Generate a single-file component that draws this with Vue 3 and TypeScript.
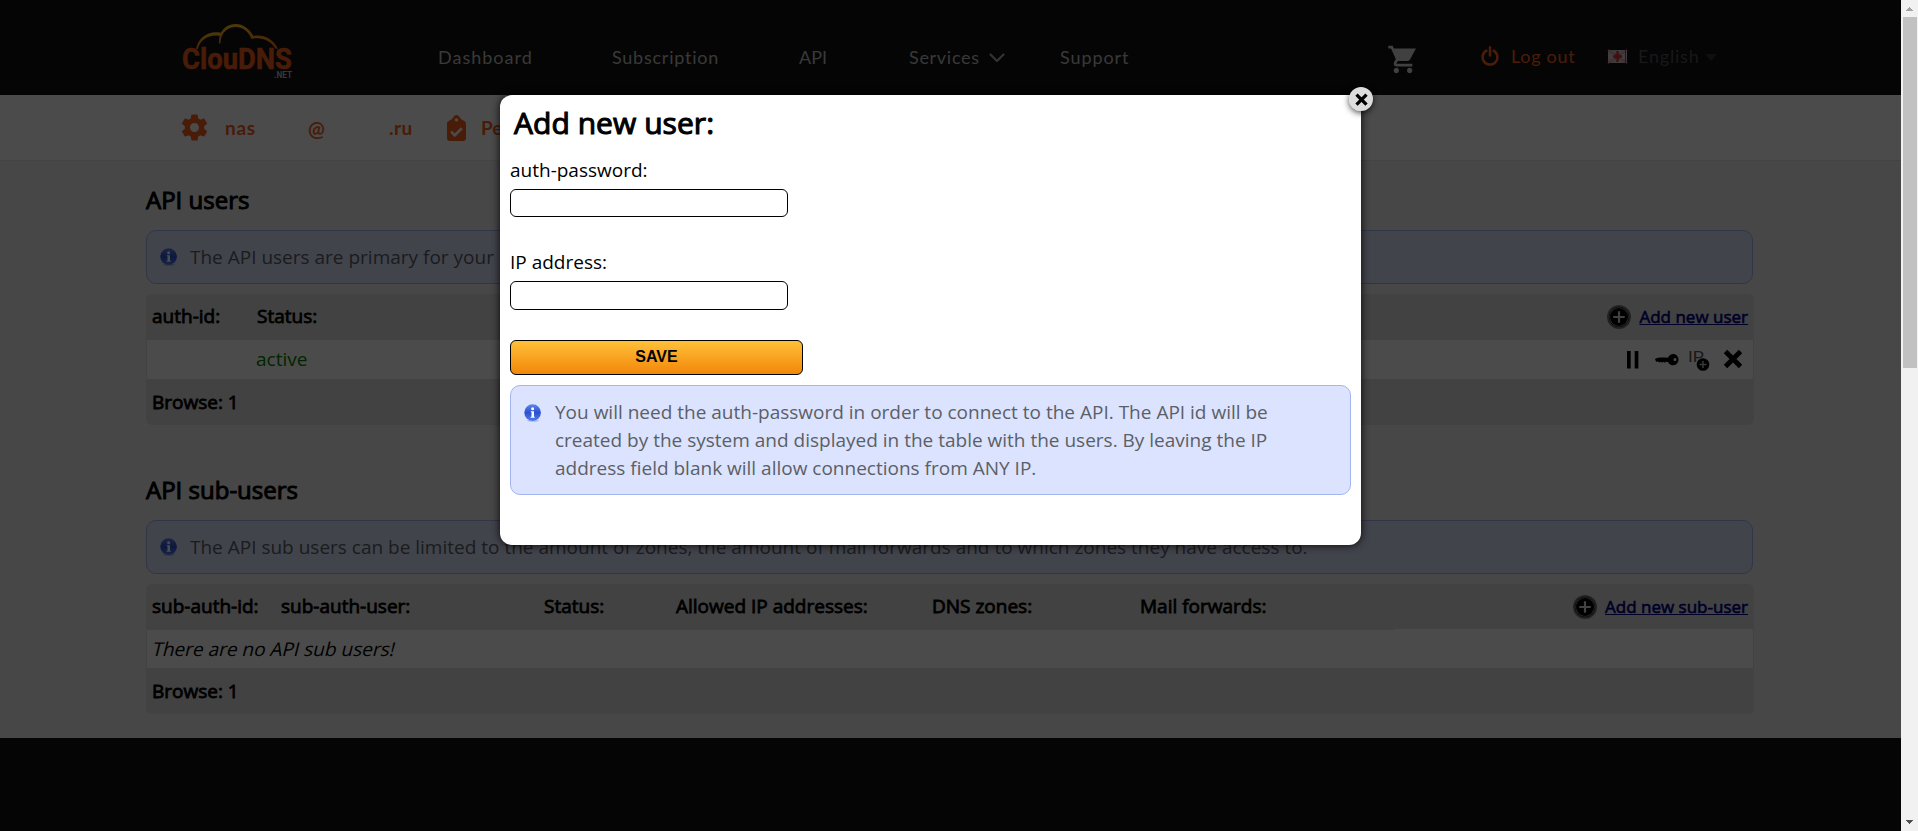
<script setup lang="ts">
import { ref } from 'vue'

interface NavItem { label: string; cls: string }
const nav: NavItem[] = [
  { label: 'Dashboard', cls: 'n-dash' },
  { label: 'Subscription', cls: 'n-sub' },
  { label: 'API', cls: 'n-api' },
  { label: 'Services', cls: 'n-serv' },
  { label: 'Support', cls: 'n-supp' },
]
const subColumns: string[] = ['sub-auth-id:', 'sub-auth-user:', 'Status:', 'Allowed IP addresses:', 'DNS zones:', 'Mail forwards:']
const authPassword = ref('')
const ipAddress = ref('')
</script>

<template>
  <div class="screen">
    <svg class="defs" width="0" height="0" aria-hidden="true">
      <defs>
        <linearGradient id="blueDisc" x1="0" y1="0" x2="0" y2="1">
          <stop offset="0" stop-color="#5f86ea" />
          <stop offset=".5" stop-color="#2b50cf" />
          <stop offset="1" stop-color="#4f7df0" />
        </linearGradient>
        <symbol id="info" viewBox="0 0 18 18">
          <ellipse cx="9" cy="16.6" rx="6" ry="1.2" fill="#8f9cc8" opacity=".6" />
          <circle cx="8.6" cy="8.6" r="8.3" fill="url(#blueDisc)" />
          <circle cx="8.6" cy="4.8" r="1.5" fill="#fff" />
          <path d="M6.8 7.3H10v5.4h.7v1H6.600v-1h.9V8.3h-.7z" fill="#fff" />
        </symbol>
        <symbol id="add" viewBox="0 0 24 24">
          <circle cx="12" cy="12" r="12" fill="#777" />
          <circle cx="12" cy="12" r="10.3" fill="#222" />
          <circle cx="12" cy="12" r="9.6" fill="#999" />
          <circle cx="12" cy="12" r="9" fill="#000" />
          <path d="M12 6.3v11.4M6.3 12h11.4" stroke="#dcdcdc" stroke-width="2.2" />
        </symbol>
      </defs>
    </svg>

    <div class="page">
      <header class="top">
        <svg class="logo" width="112" height="60" viewBox="0 0 112 60">
          <defs>
            <linearGradient id="cloud" x1="0" y1="0" x2="0" y2="1">
              <stop offset="0" stop-color="#ffc020" />
              <stop offset="1" stop-color="#f5701c" />
            </linearGradient>
          </defs>
          <g fill="url(#cloud)">
            <path d="M14 27 C16 15 27 7.500 41 11 L39.500 14 C28 11.500 18 17 16 27Z" />
            <path d="M37 22 C36 8 45 2 54 2 C62 2 68 8 71.500 14 C80 12 91 16 96 27 L93.500 26.500 C88 18 79 14.500 69.500 17 C67 10 61 5 54 5 C46 5 39 10 38.500 21Z" />
          </g>
          <text x="0" y="46.500" textLength="110" lengthAdjust="spacingAndGlyphs" class="logo-name">ClouDNS</text>
          <text x="92" y="55.500" textLength="18" lengthAdjust="spacingAndGlyphs" class="logo-net">.NET</text>
        </svg>
        <nav class="nav">
          <a v-for="n in nav" :key="n.label" :class="n.cls"><span>{{ n.label }}</span><svg v-if="n.label === 'Services'" class="chev" width="16" height="10" viewBox="0 0 16 10"><path d="M1.500 1.500 8 8l6.500-6.500" fill="none" stroke="#aaa" stroke-width="2.200" stroke-linecap="round" stroke-linejoin="round" /></svg></a>
        </nav>
        <svg class="cart" width="32" height="33" viewBox="0 0 24 24" preserveAspectRatio="none"><path fill="#d8d8d8" d="M7 18c-1.100 0-1.990.9-1.990 2S5.900 22 7 22s2-.9 2-2-.9-2-2-2zM1 2v2h2l3.600 7.590-1.350 2.450C4.520 15.370 5.480 17 7 17h12v-2H7l1.100-2h7.450c.75 0 1.410-.41 1.750-1.030L21.700 4H5.210l-.94-2H1zm16 16c-1.100 0-1.990.9-1.990 2s.89 2 1.990 2 2-.9 2-2-.9-2-2-2z" /></svg>
        <a class="logout">
          <svg width="18" height="20" viewBox="0 0 18 20"><path d="M5.500 4.700a7.400 7.400 0 1 0 7 0M9 1.200v8.300" fill="none" stroke="#f56320" stroke-width="2.500" stroke-linecap="round" /></svg>
          <span>Log out</span>
        </a>
        <a class="lang">
          <svg width="19" height="13" viewBox="0 0 19 13">
            <rect width="19" height="13" fill="#c9c9d6" />
            <path d="M0 0l19 13M19 0L0 13" stroke="#f09a9a" stroke-width="2" />
            <path d="M9.500 0v13M0 6.500h19" stroke="#dcd0d4" stroke-width="4" />
            <path d="M9.500 1v11M5 6.500h9" stroke="#e03030" stroke-width="2.400" />
            <path d="M7 4l5 5M12 4L7 9" stroke="#e03030" stroke-width="1.200" />
            <path d="M17.500 0v13" stroke="#3a55b0" stroke-width="1" />
          </svg>
          <span>English</span>
          <svg class="caret" width="12" height="7" viewBox="0 0 12 7"><path d="M0 0h12L6 7z" fill="#353535" /></svg>
        </a>
      </header>

      <div class="account">
        <svg class="gear" width="31" height="31" viewBox="0 0 24 24"><path fill="#f55f1c" d="M19.430 12.980c.04-.32.07-.64.07-.98s-.03-.66-.07-.98l2.110-1.650c.19-.15.24-.42.12-.64l-2-3.460c-.12-.22-.39-.3-.61-.22l-2.490 1c-.52-.4-1.080-.73-1.690-.98l-.38-2.650C14.460 2.180 14.250 2 14 2h-4c-.25 0-.46.18-.49.42l-.38 2.650c-.61.25-1.170.59-1.690.98l-2.490-1c-.23-.09-.49 0-.61.22l-2 3.460c-.13.22-.07.49.12.64l2.110 1.650c-.04.32-.07.65-.07.98s.03.66.07.98l-2.110 1.650c-.19.15-.24.42-.12.64l2 3.460c.12.22.39.3.61.22l2.490-1c.52.4 1.080.73 1.690.98l.38 2.650c.03.24.24.42.49.42h4c.25 0 .46-.18.49-.42l.38-2.650c.61-.25 1.170-.59 1.690-.98l2.490 1c.23.09.49 0 .61-.22l2-3.460c.12-.22.07-.49-.12-.64l-2.110-1.650zM12 15.500c-1.930 0-3.500-1.570-3.500-3.500s1.570-3.500 3.500-3.500 3.500 1.570 3.500 3.500-1.570 3.500-3.500 3.500z" /></svg>
        <span class="mail-a">nas</span><span class="mail-b">@</span><span class="mail-c">.ru</span>
        <svg class="clip" width="19" height="26" viewBox="0 0 19 26"><path fill="#f55f1c" fill-rule="evenodd" d="M9.500 0c1.600 0 2.600 1.500 4 3.500 2.500 2.400 5.500 2.500 5.500 5V23a3 3 0 0 1-3 3H3a3 3 0 0 1-3-3V8.500c0-2.500 3-2.600 5.500-5C6.900 1.500 7.900 0 9.500 0zm0 3.200a1.700 1.700 0 1 0 0 3.400 1.700 1.700 0 0 0 0-3.400zM7.700 22.200l8-8-1.800-1.900-6.200 6.200-2.700-2.700-1.800 1.800z" /></svg>
        <span class="perm">Pe</span>
      </div>

      <main class="content">
        <h2 class="fb">API users</h2>
        <div class="note"><svg width="18" height="18"><use href="#info" /></svg><p>The API users are primary for your</p></div>
        <div class="table">
          <div class="tr head head-a fb">
            <span>auth-id:</span><span>Status:</span>
            <div class="add"><svg width="24" height="24"><use href="#add" /></svg><a>Add new user</a></div>
          </div>
          <div class="tr row row-a">
            <span class="active">active</span>
            <svg class="acts" width="120" height="26" viewBox="0 0 120 26">
              <path d="M5 5h3.700v17.500H5zM12.700 5h3.700v17.500h-3.700z" />
              <path fill-rule="evenodd" d="M33 13c3-2 8-1.700 13-1.300 1-2.400 3-3.700 5.300-3.700 3 0 5.200 2.600 5.200 5.600s-2.200 5.700-5.200 5.700c-2.300 0-4.300-1.300-5.300-3.400l-2-.2-1.200 1-1.300-1-1.300 1-1.300-1-1.300.8-1.500-1-2 .2zM53 12a1.500 1.500 0 1 0 0 3 1.500 1.500 0 0 0 0-3z" />
              <text x="66" y="16" textLength="16" lengthAdjust="spacingAndGlyphs" class="ip">IP</text>
              <circle cx="81" cy="18.500" r="6.300" />
              <path d="M81 15v7M77.500 18.500h7" stroke="#bbb" stroke-width="1.500" />
              <path d="M103.500 5.500l15 15M118.500 5.500l-15 15" stroke="#000" stroke-width="4.800" />
            </svg>
          </div>
          <div class="tr foot fb">Browse: 1</div>
        </div>

        <h2 class="fb second">API sub-users</h2>
        <div class="note"><svg width="18" height="18"><use href="#info" /></svg><p>The API sub users can be limited to the amount of zones, the amount of mail forwards and to which zones they have access to.</p></div>
        <div class="table">
          <div class="tr head head-b fb">
            <span v-for="c in subColumns" :key="c">{{ c }}</span>
            <div class="add"><svg width="24" height="24"><use href="#add" /></svg><a>Add new sub-user</a></div>
          </div>
          <div class="tr row short"><em>There are no API sub users!</em></div>
          <div class="tr foot fb">Browse: 1</div>
        </div>
      </main>
      <footer class="bottom"></footer>
      <div class="shade"></div>

      <section class="modal">
        <svg class="close" width="24" height="24" viewBox="0 0 24 24"><circle cx="12" cy="12" r="12" fill="#dcdcdc" /><path d="M7.500 7.700l10 10M17.500 7.700l-10 10" stroke="#000" stroke-width="3.300" /></svg>
        <h1 class="fb">Add new user:</h1>
        <label class="l1">auth-password:</label>
        <input v-model="authPassword" class="i1" type="text" />
        <label class="l2">IP address:</label>
        <input v-model="ipAddress" class="i2" type="text" />
        <button type="button">SAVE</button>
        <div class="tip">
          <svg width="18" height="18"><use href="#info" /></svg>
          <p>You will need the auth-password in order to connect to the API. The API id will be<br />created by the system and displayed in the table with the users. By leaving the IP<br />address field blank will allow connections from ANY IP.</p>
        </div>
      </section>
    </div>

    <aside class="scroll">
      <svg width="17" height="17" viewBox="0 0 17 17"><path d="M8 7h1v1h1v1h1v1h1v1H5v-1h1V9h1V8h1z" fill="#a3a3a3" /></svg>
      <div class="thumb"></div>
      <svg width="17" height="17" viewBox="0 0 17 17"><path d="M5 6h7v1h-1v1h-1v1H9v1H8V9H7V8H6V7H5z" fill="#505050" /></svg>
    </aside>
  </div>
</template>

<style>
body { margin: 0; overflow: hidden; }
</style>

<style scoped>
* { box-sizing: border-box; }
.screen { display: flex; width: 1918px; height: 831px; overflow: hidden; font-family: "Open Sans", "Noto Sans", sans-serif; font-size: 19px; color: #000; }
.defs { position: absolute; }
svg { display: block; flex: none; overflow: visible; }
h1, h2, p { margin: 0; font-weight: 400; }
.fb { -webkit-text-stroke: .8px currentColor; }
.page { position: relative; width: 1901px; height: 831px; display: flex; flex-direction: column; background: #ededed; }
.top { height: 95px; background: #111; display: flex; padding-left: 182px; font-family: Lato, sans-serif; font-size: 18px; flex: none; }
.logo { margin-top: 22px; }
.logo-name { font: 700 30px Roboto, sans-serif; fill: #f5601c; stroke: #f5601c; stroke-width: .5; }
.logo-net { font: 700 9px Roboto, sans-serif; fill: #bbb; }
.nav { display: flex; margin-left: 144px; line-height: 24px; padding-top: 45px; width: 949px; color: #bebebe; }
.nav a { display: flex; }
.n-dash { width: 174px; letter-spacing: 1px; }
.n-sub { width: 187px; letter-spacing: .75px; }
.n-api { width: 110px; }
.n-serv { width: 151px; letter-spacing: .7px; }
.chev { margin: 8px 0 0 9px; }
.n-supp { letter-spacing: .9px; }
.cart { margin-top: 43px; }
.logout { display: flex; gap: 12px; margin-left: 62px; margin-top: 44px; color: #f56320; line-height: 24px; width: 127px; letter-spacing: .7px; }
.logout svg { margin-top: 2px; }
.lang { display: flex; color: #505050; margin-top: 44px; line-height: 24px; letter-spacing: .8px; }
.lang svg { margin: 6px 11px 0 0; }
.lang .caret { margin: 10px 0 0 5px; }
.account { height: 66px; flex: none; background: #fafafa; border-bottom: 1px solid #e0e0e0; padding-left: 179px; display: flex; align-items: center; font-family: Lato, sans-serif; font-weight: 700; font-size: 19px; color: #f55f1c; }
.gear { margin-right: 15px; }
.mail-a { width: 83px; letter-spacing: .7px; }
.mail-b { width: 81px; font-size: 20px; }
.mail-c { width: 58px; letter-spacing: .5px; }
.clip { margin-right: 15px; }
.content { padding: 0 148px 0 146px; height: 577px; flex: none; display: flex; flex-direction: column; }
h2 { height: 69px; font-size: 24px; line-height: 78px; }
h2.second { height: 70px; line-height: 80px; margin-top: 25px; }
h2.fb { -webkit-text-stroke-width: 1px; }
.note { height: 54px; width: 1607px; border: 1px solid #a2b5f0; border-radius: 10px; background: #dce3ff; display: flex; align-items: center; padding-left: 13px; gap: 12px; color: #5b5f66; flex: none; line-height: 28px; white-space: nowrap; }
.table { margin-top: 10px; width: 1608px; flex: none; background: #dcdcdc; border-radius: 6px; }
.tr { display: flex; align-items: center; white-space: nowrap; }
.head { display: grid; height: 46px; line-height: 44px; padding: 0 1px 0 6px; }
.head > span { height: 46px; }
.head-a { grid-template-columns: 105px 499px 1fr; }
.head-b { grid-template-columns: 129px 263px 132px 256px 208px 254px 1fr; }
.head-b .add { border-bottom: 1px solid #fafafa; }
.add { display: flex; align-items: center; justify-content: flex-end; gap: 8px; padding-right: 5px; height: 46px; -webkit-text-stroke-width: 0; }
.add a { font-size: 17px; line-height: 22px; color: #000080; text-decoration: underline; -webkit-text-stroke-width: .6px; }
.row { height: 39px; margin: 0 1px; background: #fafafa; padding: 0 11px 2px 5px; }
.row-a { padding-left: 109px; justify-content: space-between; }
.row.short { height: 38px; padding-bottom: 0; padding-left: 6px; }
em { display: inline-block; font-style: normal; transform: skewX(-14deg); }
.active { color: #008000; }
.ip { font: 400 15px Roboto, sans-serif; fill: #555; }
.foot { height: 46px; padding: 0 0 1px 6px; }
.bottom { flex: 1; background: #111; }
.shade { position: absolute; inset: 0; background: rgba(0, 0, 0, .7); }
.modal { position: absolute; left: 500px; top: 95px; width: 861px; height: 450px; background: #fff; border-radius: 12px; padding: 0 10px; display: flex; flex-direction: column; align-items: flex-start; box-shadow: 0 0 8px rgba(0, 0, 0, .9); }
.close { position: absolute; right: -12px; top: -8px; border-radius: 50%; box-shadow: 0 2px 6px rgba(0, 0, 0, .7); }
h1 { font-size: 30px; line-height: 56px; height: 56px; padding-left: 4px; }
h1.fb { -webkit-text-stroke-width: 1.1px; letter-spacing: .05px; }
label { line-height: 24px; }
.l1 { margin-top: 7px; }
input { width: 278px; height: 28px; border: 1px solid #000; border-radius: 6px; background: #fff; outline: none; padding: 0 6px; }
.i1 { margin-top: 7px; }
.l2 { margin-top: 33px; }
.i2 { height: 29px; margin-top: 7px; }
button { margin-top: 30px; width: 293px; height: 35px; border: 1px solid #000; border-radius: 6px; background: linear-gradient(#ffc038, #f2870a); font: 700 16px "Liberation Sans", Arial, sans-serif; color: #000; padding: 0 0 1px; }
.tip { margin-top: 10px; width: 841px; height: 110px; background: #dce3ff; border: 1px solid #a2b5f0; border-radius: 10px; display: flex; gap: 13px; padding: 12px 13px; color: #5b5f66; line-height: 28px; white-space: nowrap; }
.tip svg { margin-top: 6px; }
.scroll { width: 17px; height: 831px; background: #f1f1f1; display: flex; flex-direction: column; }
.thumb { width: 14px; height: 351px; margin: 0 1px 429px 2px; background: #c1c1c1; }
.scroll svg:last-child { margin-top: 17px; }
</style>
